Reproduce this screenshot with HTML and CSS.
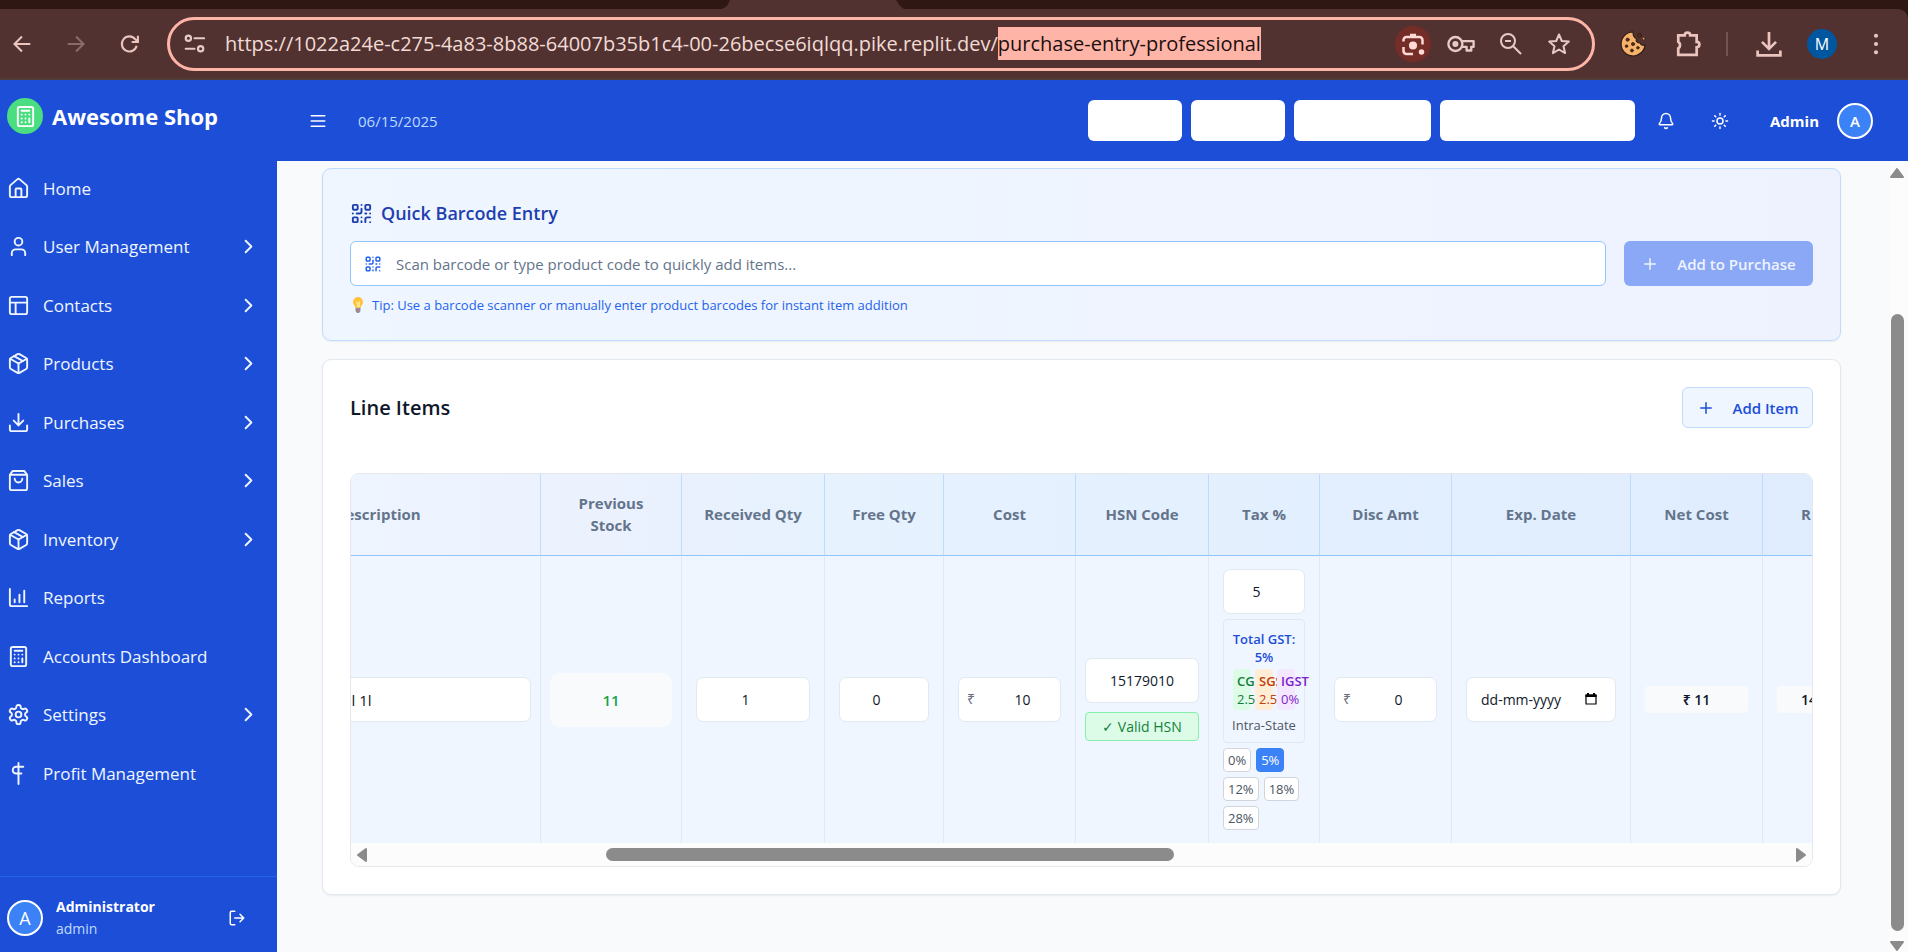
FILE: index.html
```html
<!DOCTYPE html>
<html lang="en">
<head>
<meta charset="utf-8">
<title>Purchase Entry</title>
<link rel="stylesheet" href="styles.css">
</head>
<body>
<svg class="sprite" aria-hidden="true">
  <symbol id="chevron" viewBox="0 0 24 24"><path d="m9 18 6-6-6-6"/></symbol>
  <symbol id="box" viewBox="0 0 24 24"><path d="M11 21.73a2 2 0 0 0 2 0l7-4A2 2 0 0 0 21 16V8a2 2 0 0 0-1-1.73l-7-4a2 2 0 0 0-2 0l-7 4A2 2 0 0 0 3 8v8a2 2 0 0 0 1 1.73z"/><path d="M12 22V12"/><path d="m3.3 7 8.7 5 8.7-5"/><path d="m7.5 4.27 9 5.15"/></symbol>
  <symbol id="calc" viewBox="0 0 24 24"><rect x="4" y="2" width="16" height="20" rx="2"/><path d="M8 6h8M16 14v4M16 10h.01M12 10h.01M8 10h.01M12 14h.01M8 14h.01M12 18h.01M8 18h.01"/></symbol>
  <symbol id="plus" viewBox="0 0 24 24"><path d="M5 12h14M12 5v14"/></symbol>
  <symbol id="qr" viewBox="0 0 24 24"><rect x="3" y="3" width="5" height="5" rx="1"/><rect x="16" y="3" width="5" height="5" rx="1"/><rect x="3" y="16" width="5" height="5" rx="1"/><path d="M21 16h-3a2 2 0 0 0-2 2v3M21 21v.01M12 7v3a2 2 0 0 1-2 2H7M3 12h.01M12 3h.01M12 16v.01M16 12h1M21 12v.01M12 21v-1"/></symbol>
</svg>

<div class="browser">
  <div class="tabstrip"><div class="tab"></div></div>
  <div class="toolbar">
    <button class="tool" aria-label="Back"><svg viewBox="0 0 24 24"><path d="M22 12H3M12 3l-9 9 9 9"/></svg></button>
    <button class="tool dim" aria-label="Forward"><svg viewBox="0 0 24 24"><path d="M2 12h19M12 3l9 9-9 9"/></svg></button>
    <button class="tool" aria-label="Reload"><svg viewBox="0 0 24 24"><path d="M20 14a9 9 0 1 1-1.600-7.600L21 9M21.500 2v7.500H14"/></svg></button>
    <div class="address">
      <svg class="site" viewBox="0 0 24 24"><circle cx="5" cy="6" r="3"/><path d="M12 6h11M2 18h10"/><circle cx="19" cy="18" r="3"/></svg>
      <input class="url" id="url" type="text" aria-label="Address" spellcheck="false" value="https://1022a24e-c275-4a83-8b88-64007b35b1c4-00-26becse6iqlqq.pike.replit.dev/purchase-entry-professional">
      <button class="lens" aria-label="Search with lens"><svg viewBox="0 0 24 24"><path d="M2.500 9.500V8a3 3 0 0 1 3-3h13a3 3 0 0 1 3 3v4.500M2.500 15v4a3 3 0 0 0 3 3H12"/><path d="M9 3.500h6" stroke-width="3.500"/><circle class="solid" cx="12" cy="13.500" r="2.800"/><circle class="solid" cx="20.500" cy="20" r="1.500"/></svg></button>
      <button class="pill-icon key" aria-label="Passwords"><svg viewBox="0 0 30 20"><circle cx="9" cy="10" r="7.500"/><circle class="solid" cx="9" cy="10" r="2"/><path d="M16 7h12.500v6H26v4h-5v-4h-5"/></svg></button>
      <button class="pill-icon" aria-label="Zoom"><svg viewBox="0 0 24 24"><circle cx="9" cy="9" r="7"/><path d="M14 14l8 8M6 9h6"/></svg></button>
      <button class="pill-icon" aria-label="Bookmark"><svg viewBox="0 0 24 24"><path d="M12 2.500l2.800 6.500 7 .6-5.300 4.600 1.600 6.900L12 17.500l-6.100 3.600 1.600-6.900L2.200 9.600l7-.6z"/></svg></button>
    </div>
    <div class="extensions">
      <svg class="cookie" viewBox="0 0 24 24"><path d="M12 1a11 11 0 1 0 11 12c-2 .6-4-.2-4.500-2-2.500 0-4-1.500-3.500-4-2-.8-3-3-3-6z" fill="#f6b26b" stroke="#2b1a12"/><g fill="#5b2c17" stroke="#2b1a12" stroke-width=".6"><circle cx="7" cy="8" r="1.500"/><circle cx="12" cy="12" r="1.500"/><circle cx="6" cy="14" r="1.200"/><circle cx="11" cy="18" r="1.400"/><circle cx="16.500" cy="15.500" r="1.200"/><circle cx="18" cy="4" r="1.800"/><circle cx="22" cy="7" r="1.200" fill="#f6b26b"/></g></svg>
      <button class="tool puzzle" aria-label="Extensions"><svg viewBox="0 0 24 24"><path d="M3 4h6a2.500 2.500 0 0 1 5 0h6v6a2.500 2.500 0 0 1 0 5v7H3v-6a3.500 3.500 0 0 0 0-6z"/></svg></button>
      <span class="divider"></span>
      <button class="tool download" aria-label="Downloads"><svg viewBox="0 0 24 24"><path d="M12 1v15M5.500 10l6.500 6.500 6.500-6.500M1.500 18v4.500h21V18"/></svg></button>
      <button class="profile" aria-label="Profile">M</button>
      <button class="tool menu" aria-label="Menu"><svg viewBox="0 0 24 24"><circle class="solid" cx="12" cy="3" r="1.500"/><circle class="solid" cx="12" cy="12" r="1.500"/><circle class="solid" cx="12" cy="21" r="1.500"/></svg></button>
    </div>
  </div>
</div>

<div class="app">
  <aside class="sidebar">
    <div class="brand"><span class="logo"><svg class="icon"><use href="#calc"/></svg></span><span>Awesome Shop</span></div>
    <nav class="nav">
      <a href="#"><svg class="icon" viewBox="0 0 24 24"><path d="M15 21v-8a1 1 0 0 0-1-1h-4a1 1 0 0 0-1 1v8"/><path d="M3 10a2 2 0 0 1 .709-1.528l7-5.999a2 2 0 0 1 2.582 0l7 5.999A2 2 0 0 1 21 10v9a2 2 0 0 1-2 2H5a2 2 0 0 1-2-2z"/></svg><span>Home</span></a>
      <a href="#"><svg class="icon" viewBox="0 0 24 24"><path d="M19 21v-2a4 4 0 0 0-4-4H9a4 4 0 0 0-4 4v2"/><circle cx="12" cy="7" r="4"/></svg><span>User Management</span><svg class="icon"><use href="#chevron"/></svg></a>
      <a href="#"><svg class="icon" viewBox="0 0 24 24"><rect x="3" y="3" width="18" height="18" rx="2"/><path d="M3 9h18M9 21V9"/></svg><span>Contacts</span><svg class="icon"><use href="#chevron"/></svg></a>
      <a href="#"><svg class="icon"><use href="#box"/></svg><span>Products</span><svg class="icon"><use href="#chevron"/></svg></a>
      <a href="#"><svg class="icon" viewBox="0 0 24 24"><path d="M21 15v4a2 2 0 0 1-2 2H5a2 2 0 0 1-2-2v-4M7 10l5 5 5-5M12 15V3"/></svg><span>Purchases</span><svg class="icon"><use href="#chevron"/></svg></a>
      <a href="#"><svg class="icon" viewBox="0 0 24 24"><path d="M6 2 3 6v14a2 2 0 0 0 2 2h14a2 2 0 0 0 2-2V6l-3-4ZM3 6h18M16 10a4 4 0 0 1-8 0"/></svg><span>Sales</span><svg class="icon"><use href="#chevron"/></svg></a>
      <a href="#"><svg class="icon"><use href="#box"/></svg><span>Inventory</span><svg class="icon"><use href="#chevron"/></svg></a>
      <a href="#"><svg class="icon" viewBox="0 0 24 24"><path d="M3 3v16a2 2 0 0 0 2 2h16M13 17V9M18 17V5M8 17v-3"/></svg><span>Reports</span></a>
      <a href="#"><svg class="icon"><use href="#calc"/></svg><span>Accounts Dashboard</span></a>
      <a href="#"><svg class="icon" viewBox="0 0 24 24"><path d="M12.220 2h-.44a2 2 0 0 0-2 2v.18a2 2 0 0 1-1 1.730l-.43.25a2 2 0 0 1-2 0l-.15-.08a2 2 0 0 0-2.730.73l-.22.38a2 2 0 0 0 .73 2.730l.15.1a2 2 0 0 1 1 1.720v.51a2 2 0 0 1-1 1.740l-.15.09a2 2 0 0 0-.73 2.730l.22.38a2 2 0 0 0 2.730.73l.15-.08a2 2 0 0 1 2 0l.43.25a2 2 0 0 1 1 1.730V20a2 2 0 0 0 2 2h.44a2 2 0 0 0 2-2v-.18a2 2 0 0 1 1-1.730l.43-.25a2 2 0 0 1 2 0l.15.08a2 2 0 0 0 2.730-.73l.22-.39a2 2 0 0 0-.73-2.730l-.15-.08a2 2 0 0 1-1-1.740v-.5a2 2 0 0 1 1-1.740l.15-.09a2 2 0 0 0 .73-2.730l-.22-.38a2 2 0 0 0-2.730-.73l-.15.08a2 2 0 0 1-2 0l-.43-.25a2 2 0 0 1-1-1.730V4a2 2 0 0 0-2-2z"/><circle cx="12" cy="12" r="3"/></svg><span>Settings</span><svg class="icon"><use href="#chevron"/></svg></a>
      <a href="#"><svg class="icon" viewBox="0 0 24 24"><path d="M12 1v22M17 5H9.500a3.500 3.500 0 0 0 0 7H15"/></svg><span>Profit Management</span></a>
    </nav>
    <div class="account">
      <span class="avatar">A</span>
      <div class="who"><strong>Administrator</strong><span>admin</span></div>
      <button class="ghost" aria-label="Log out"><svg class="small" viewBox="0 0 24 24"><path d="M9 21H5a2 2 0 0 1-2-2V5a2 2 0 0 1 2-2h4M16 17l5-5-5-5M21 12H9"/></svg></button>
    </div>
  </aside>

  <div class="page">
    <header class="topbar">
      <button class="ghost" aria-label="Toggle menu"><svg class="small" viewBox="0 0 24 24"><path d="M3 5h18M3 12h18M3 19h18"/></svg></button>
      <span class="date">06/15/2025</span>
      <div class="shortcuts">
        <button class="blank w1" aria-label="Shortcut 1"></button>
        <button class="blank w1" aria-label="Shortcut 2"></button>
        <button class="blank w2" aria-label="Shortcut 3"></button>
        <button class="blank w3" aria-label="Shortcut 4"></button>
      </div>
      <button class="ghost bell" aria-label="Notifications"><svg class="small" viewBox="0 0 24 24"><path d="M10.268 21a2 2 0 0 0 3.464 0M3.262 15.326A1 1 0 0 0 4 17h16a1 1 0 0 0 .74-1.673C19.410 13.956 18 12.499 18 8A6 6 0 0 0 6 8c0 4.499-1.411 5.956-2.738 7.326"/></svg></button>
      <button class="ghost sun" aria-label="Theme"><svg class="small" viewBox="0 0 24 24"><circle cx="12" cy="12" r="4"/><path d="M12 2v2M12 20v2M4.930 4.930l1.410 1.410M17.660 17.660l1.410 1.410M2 12h2M20 12h2M6.340 17.660l-1.410 1.410M19.070 4.930l-1.410 1.410"/></svg></button>
      <strong class="name">Admin</strong>
      <span class="avatar bold">A</span>
    </header>

    <div class="view">
      <main class="content">
        <section class="card scan">
          <h2><svg class="icon"><use href="#qr"/></svg><label for="code">Quick Barcode Entry</label></h2>
          <div class="scan-row">
            <div class="field"><svg class="small"><use href="#qr"/></svg><input id="code" type="text" placeholder="Scan barcode or type product code to quickly add items..."></div>
            <button class="add-purchase" disabled><svg class="small"><use href="#plus"/></svg>Add to Purchase</button>
          </div>
          <p class="tip"><svg class="bulb" viewBox="0 0 16 16"><path d="M8 0a5 5 0 0 1 5 5c0 2.500-2 3.500-2.500 6h-5C5 8.500 3 7.500 3 5a5 5 0 0 1 5-5z" fill="#fcc33b"/><path d="M6 3l2 3 2-3v7H7z" fill="#ffe48a"/><path d="M5.500 11h5v3L9 16H7l-1.500-2z" fill="#9b8a9c"/></svg>Tip: Use a barcode scanner or manually enter product barcodes for instant item addition</p>
        </section>

        <section class="card items">
          <div class="items-head"><h1>Line Items</h1><button class="add-item"><svg class="small"><use href="#plus"/></svg>Add Item</button></div>
          <div class="frame">
            <div class="scroller" id="scroller">
              <table>
                <colgroup><col class="c-desc"><col class="c-stock"><col class="c-recv"><col class="c-free"><col class="c-cost"><col class="c-hsn"><col class="c-tax"><col class="c-cost"><col class="c-exp"><col class="c-cost"><col class="c-cost"></colgroup>
                <thead><tr><th>Description</th><th>Previous Stock</th><th>Received Qty</th><th>Free Qty</th><th>Cost</th><th>HSN Code</th><th>Tax %</th><th>Disc Amt</th><th>Exp. Date</th><th>Net Cost</th><th class="cut">R</th></tr></thead>
                <tbody><tr>
                  <td class="tight"><input class="desc" type="text" aria-label="Description" value="Oil 1l"></td>
                  <td class="tight"><div class="stock">11</div></td>
                  <td><input type="number" aria-label="Received quantity" value="1"></td>
                  <td><input type="number" aria-label="Free quantity" value="0"></td>
                  <td><div class="money"><span>₹</span><input type="number" aria-label="Cost" value="10"></div></td>
                  <td class="tight"><input class="hsn" type="text" aria-label="HSN code" value="15179010"><div class="valid">✓ Valid HSN</div></td>
                  <td class="tax"><input type="number" aria-label="Tax percent" value="5">
                    <div class="gst"><div class="total">Total GST: 5%</div>
                      <div class="split"><div class="cgst"><b>CGST</b><span>2.5%</span></div><div class="sgst"><b>SGST</b><span>2.5%</span></div><div class="igst"><b>IGST</b><span>0%</span></div></div>
                      <div class="state">Intra-State</div></div>
                    <div class="rates"><button>0%</button><button class="on">5%</button><button>12%</button><button>18%</button><button>28%</button></div>
                  </td>
                  <td><div class="money"><span>₹</span><input type="number" aria-label="Discount amount" value="0"></div></td>
                  <td><div class="dated"><input type="text" aria-label="Expiry date" value="dd-mm-yyyy"><button aria-label="Pick a date"><svg viewBox="0 0 14 14"><path d="M2 3h10v9H2z" fill="none" stroke="#000" stroke-width="1.200"/><path d="M1.400 2.400h11.200V5H1.400zM3 1h2v2H3zM9 1h2v2H9z"/></svg></button></div></td>
                  <td><div class="sum">₹ 11</div></td>
                  <td><div class="sum cut">14</div></td>
                </tr></tbody>
              </table>
            </div>
            <div class="hbar"><svg viewBox="0 0 12 16"><path d="M10 2v12L2 8z"/></svg><div class="track"><div class="thumb"></div></div><svg viewBox="0 0 12 16"><path d="M2 2v12l8-6z"/></svg></div>
          </div>
        </section>
      </main>
      <div class="vbar"><svg viewBox="0 0 16 12"><path d="M2 10h12L8 2z"/></svg><div class="track"><div class="thumb"></div></div><svg viewBox="0 0 16 12"><path d="M2 2h12l-6 8z"/></svg></div>
    </div>
  </div>
</div>
<script src="app.js"></script>
</body>
</html>
```
FILE: styles.css
```css
* { box-sizing: border-box; }
body { margin: 0; height: 100vh; display: flex; flex-direction: column; overflow: hidden; font-family: "Open Sans", "Noto Sans", sans-serif; font-size: 15px; color: #0f172a; background: #f8fafc; }
button, input { font: inherit; color: inherit; margin: 0; }
button { border: 0; background: none; padding: 0; display: inline-flex; align-items: center; justify-content: center; flex: none; }
a { color: inherit; text-decoration: none; }
svg { flex: none; fill: none; stroke: currentColor; stroke-width: 2; stroke-linecap: round; stroke-linejoin: round; }
.sprite { display: none; }
.solid { fill: currentColor; }
.icon { width: 23px; height: 23px; }
.small { width: 18px; height: 18px; }

/* Browser chrome */
.browser { flex: none; background: #2f1814; color: #ebc4be; }
.tabstrip { height: 9px; display: flex; }
.tab { width: 182px; margin-left: 722px; background: #513230; clip-path: polygon(8px 0, 174px 0, 178px 6px, 182px 9px, 0 9px, 5px 6px); }
.toolbar { height: 71px; display: flex; align-items: center; padding: 0 21px 0 11px; background: #513230; border-top-right-radius: 10px; border-bottom: 2px solid #4f3d36; }
.tool { width: 22px; height: 22px; margin-right: 32px; }
.tool svg { width: 20px; height: 20px; stroke-width: 2.5; stroke-linecap: butt; stroke-linejoin: miter; }
.dim { color: #8d6a66; }
.address { flex: 1; height: 54px; display: flex; align-items: center; margin: 0 25px 0 -6px; padding: 0 18px 0 14px; border: 3px solid #ffb4a8; border-radius: 27px; color: #e5cbc6; }
.address .site { width: 21px; height: 21px; margin-right: 20px; stroke-width: 2.5; }
.url { flex: 1; min-width: 0; height: 33px; padding: 0; border: 0; outline: 0; background: none; color: #f1dbd6; font-size: 20px; line-height: 33px; }
.url::selection { background: #ffb4a8; color: #1c0f0d; }
.lens { width: 36px; height: 36px; margin-right: 15px; border-radius: 50%; background: #752d28; color: #ffdad4; }
.lens svg { width: 24px; height: 24px; stroke-width: 2.5; stroke-linecap: butt; }
.pill-icon { width: 30px; height: 28px; margin-right: 18px; }
.pill-icon.key { margin-right: 20px; }
.pill-icon:last-child { margin-right: 0; }
.pill-icon svg { width: 24px; height: 24px; stroke-linecap: butt; }
.pill-icon.key svg { width: 28px; height: 20px; stroke-width: 2.5; }
.extensions { display: flex; align-items: center; }
.cookie { width: 26px; height: 26px; margin-right: 29px; stroke-width: 1; }
.puzzle, .download { width: 26px; height: 26px; margin-right: 25px; }
.puzzle svg, .download svg { width: 26px; height: 26px; }
.divider { width: 2px; height: 24px; margin-right: 28px; background: #765350; }
.profile { width: 30px; height: 30px; margin-right: 28px; border-radius: 50%; background: #00569f; color: #fff; font-size: 16px; }
.menu { margin-right: 0; }
.menu svg { width: 22px; height: 22px; stroke-width: 1.5; }

/* Sidebar */
.app { flex: 1; min-height: 0; display: flex; }
.sidebar { flex: none; width: 277px; display: flex; flex-direction: column; background: #1d4ed8; color: #fff; }
.brand { display: flex; align-items: center; gap: 9px; padding: 18px 7px 31px; font-size: 22px; line-height: 34px; font-weight: 700; }
.logo { width: 36px; height: 36px; display: grid; place-items: center; border-radius: 50%; background: #4ade80; }
.nav { flex: 1; display: flex; flex-direction: column; justify-content: space-between; padding-bottom: 80px; font-size: 17px; color: #eff6ff; }
.nav a { display: flex; align-items: center; gap: 13px; height: 46px; padding: 0 17px 0 7px; }
.nav span { flex: 1; }
.account { display: flex; align-items: center; gap: 13px; height: 76px; padding: 7px 31px 0 7px; border-top: 1px solid #2563eb; }
.avatar { flex: none; width: 36px; height: 36px; display: grid; place-items: center; border: 2px solid #fff; border-radius: 50%; background: #3b82f6; color: #fff; font-size: 18px; }
.avatar.bold { font-size: 15px; font-weight: 600; }
.who { flex: 1; display: flex; flex-direction: column; font-size: 14px; line-height: 22px; }
.who span { color: #bfdbfe; }

/* Header */
.page { flex: 1; min-width: 0; display: flex; flex-direction: column; }
.topbar { flex: none; height: 81px; display: flex; align-items: center; padding: 0 35px 0 32px; background: #1d4ed8; color: #fff; }
.date { margin-left: 31px; font-size: 15px; color: #bfdbfe; }
.shortcuts { display: flex; gap: 9px; margin-left: auto; }
.blank { height: 41px; border-radius: 6px; background: #fff; }
.w1 { width: 94px; } .w2 { width: 137px; } .w3 { width: 195px; }
.bell { margin-left: 22px; }
.sun { margin-left: 36px; }
.name { margin: 0 18px 0 41px; font-size: 15px; font-weight: 700; }

/* Content */
.view { flex: 1; min-height: 0; display: flex; }
.content { flex: 1; min-width: 0; padding: 7px 49px 0 45px; overflow: hidden; }
.card { border: 1px solid #e2e8f0; border-radius: 9px; background: #fff; box-shadow: 0 1px 2px rgba(15, 23, 42, .06); }
.scan { margin-bottom: 18px; padding: 27px; height: 173px; border-color: #bfdbfe; background: linear-gradient(90deg, #eff6ff, #eef2ff); }
.scan h2 { display: flex; align-items: center; gap: 8px; margin: 0 0 11px; font-size: 18px; line-height: 34px; font-weight: 600; color: #1e40af; }
.scan-row { display: flex; gap: 18px; }
.field { flex: 1; height: 45px; display: flex; align-items: center; gap: 14px; padding: 0 13px; border: 1px solid #93c5fd; border-radius: 6px; background: #fff; color: #2563eb; }
.field input { flex: 1; border: 0; outline: 0; padding: 0; color: #0f172a; }
.field input::placeholder { color: #64748b; opacity: 1; }
.add-purchase { width: 189px; height: 45px; gap: 18px; border-radius: 6px; background: #8aa8f6; color: #eff3fe; font-weight: 600; }
.tip { display: flex; align-items: center; gap: 6px; margin: 9px 0 0; font-size: 13px; line-height: 20px; color: #2563eb; }
.bulb { width: 16px; height: 16px; stroke: none; }
.items { padding: 27px; }
.items-head { display: flex; align-items: center; justify-content: space-between; margin-bottom: 45px; }
.items h1 { margin: 0; font-size: 20px; line-height: 30px; font-weight: 600; }
.add-item { width: 131px; height: 41px; gap: 18px; border: 1px solid #bfdbfe; border-radius: 6px; background: #eff6ff; color: #1d4ed8; font-weight: 600; }

/* Items table */
.frame { border: 1px solid #e5e7eb; border-radius: 9px; overflow: hidden; }
.scroller { overflow: hidden; }
table { table-layout: fixed; width: 1634px; border-collapse: separate; border-spacing: 0; background: #eff6ff; }
.c-desc { width: 326px; } .c-stock { width: 141px; } .c-recv { width: 143px; } .c-free { width: 119px; } .c-cost { width: 132px; } .c-hsn { width: 133px; } .c-tax { width: 111px; } .c-exp { width: 179px; }
thead tr { background: linear-gradient(90deg, #eff6ff, #eaf1fe 28%, #e6f2fe 36%, #dfecfe); }
th { height: 82px; padding: 0 22px 2px; border-right: 1px solid #bfdbfe; border-bottom: 1px solid #93c5fd; font-size: 15px; line-height: 22px; font-weight: 700; color: #64748b; }
th:nth-child(3) { padding: 0 0 2px; }
th.cut { text-align: left; padding-left: 38px; }
td { height: 287px; padding: 13px 14px; border-right: 1px solid #e2e8f0; text-align: center; }
td.tight { padding: 13px 9px; }
td input { width: 100%; height: 45px; padding: 0 13px; border: 1px solid #e2e8f0; border-radius: 7px; background: #fff; text-align: center; font-size: 14px; }
input.desc { text-align: left; padding-left: 111px; font-size: 15px; }
.stock { height: 54px; line-height: 54px; border-radius: 9px; background: #f8fafc; color: #16a34a; font-weight: 600; }
.money, .dated { position: relative; }
.money span { position: absolute; left: 9px; top: 12px; line-height: 20px; font-size: 14px; color: #6b7280; }
.money input { padding-left: 54px; }
.valid { height: 29px; margin-top: 9px; border: 1px solid #86efac; border-radius: 4px; background: #dcfce7; color: #15803d; font-size: 14px; line-height: 27px; }
td.tax { font-size: 13px; line-height: 18px; }
.gst { margin-top: 5px; padding: 10px 4px 8px; border: 1px solid #e2e8f0; border-radius: 4px; }
.total { color: #1d4ed8; font-weight: 600; }
.split { display: grid; grid-template-columns: repeat(3, minmax(0, 1fr)); gap: 4px; margin: 3px 5px 6px; text-align: left; white-space: nowrap; }
.split div { padding: 3px 4px 2px; border-radius: 4px; }
.split b, .split span { display: block; }
.split b { font-weight: 600; }
.cgst { background: #dcfce7; color: #15803d; }
.sgst { background: #ffedd5; color: #c2410c; }
.igst { background: #f3e8ff; color: #7e22ce; }
.state { color: #4b5563; white-space: nowrap; }
.rates { display: flex; flex-wrap: wrap; gap: 5px; margin: 5px -4px 0 0; }
.rates button { height: 24px; padding: 0 4px; border: 1px solid #d1d5db; border-radius: 4px; background: #fff; color: #4b5563; }
.rates .on { border-color: #3b82f6; background: #3b82f6; color: #fff; }
.dated input { text-align: left; padding: 0 14px; }
.dated button { position: absolute; right: 18px; top: 15px; }
.dated svg { width: 14px; height: 14px; fill: #000; stroke: none; }
.sum { height: 27px; border-radius: 4px; background: #f8fafc; font-size: 14px; line-height: 27px; font-weight: 600; }
.sum.cut { text-align: left; padding-left: 24px; }

/* Scrollbars */
.hbar svg, .vbar svg { fill: #8b8b8b; stroke: #8b8b8b; }
.hbar { display: flex; align-items: center; justify-content: space-between; height: 23px; padding: 0 5px; background: #fcfcfc; }
.hbar svg { width: 12px; height: 16px; }
.hbar .track { flex: 1; display: flex; padding-left: 16%; margin: 0 6px; }
.hbar .thumb { width: 48%; height: 13px; border-radius: 7px; background: #8b8b8b; }
.vbar { flex: none; width: 18px; display: flex; flex-direction: column; align-items: center; padding: 6px 4px 0 0; background: #fcfcfc; overflow: hidden; }
.vbar svg { width: 16px; height: 12px; }
.vbar .track { flex: 1; display: flex; flex-direction: column; justify-content: flex-end; padding-bottom: 9px; }
.vbar .thumb { width: 13px; height: 82%; border-radius: 7px; background: #8b8b8b; }
```
FILE: app.js
```js
document.getElementById('scroller').scrollLeft = 136;
const url = document.getElementById('url');
url.focus();
url.setSelectionRange(url.value.lastIndexOf('/') + 1, url.value.length);
```
